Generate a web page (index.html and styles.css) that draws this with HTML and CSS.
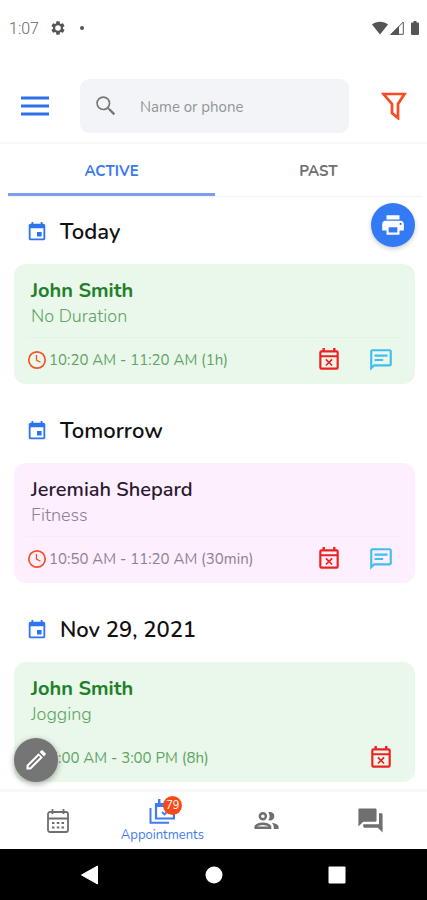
FILE: index.html
```
<!DOCTYPE html>
<html lang="en">
<head>
<meta charset="utf-8">
<meta name="viewport" content="width=device-width, initial-scale=1">
<title>Appointments</title>
<link rel="stylesheet" href="styles.css">
</head>
<body>
<svg class="sprite" aria-hidden="true">
  <symbol id="day" viewBox="0 0 24 24"><path d="M17 12h-5v5h5v-5zM16 1v2H8V1H6v2H5c-1.100 0-2 .9-2 2v14c0 1.100.9 2 2 2h14c1.100 0 2-.9 2-2V5c0-1.100-.9-2-2-2h-1V1h-2zm3 18H5V8h14v11z"/></symbol>
  <symbol id="clock" viewBox="0 0 20 20"><circle cx="10" cy="10" r="8.200" fill="none" stroke="currentColor" stroke-width="1.700"/><path d="M9.500 5v5l4 2.200" fill="none" stroke="currentColor" stroke-width="1.300"/></symbol>
  <symbol id="cancel" viewBox="0 0 24 24"><path d="M19 3h-1V1h-2.200v2H8.200V1H6v2H5a2 2 0 0 0-2 2v14a2 2 0 0 0 2 2h14a2 2 0 0 0 2-2V5a2 2 0 0 0-2-2zm0 16H5V9.500h14V19zm0-11.500H5V5h14v2.500zM9.700 17.600l2.300-2.300 2.300 2.300 1.100-1.100-2.300-2.300 2.300-2.300-1.100-1.100-2.300 2.300-2.300-2.300-1.100 1.100 2.300 2.300-2.300 2.300z"/></symbol>
  <symbol id="message" viewBox="0 0 24 24"><path d="M4 4h16v12H5.200L4 17.200V4m0-2c-1.100 0-2 .9-2 2v18l4-4h14c1.100 0 2-.9 2-2V4c0-1.100-.9-2-2-2H4zm2 9h8v2H6v-2zm0-4h12v2H6V7z"/></symbol>
</svg>
<div class="app">
  <header class="top">
    <div class="status">
      <span class="time">1:07</span>
      <svg class="gear" viewBox="0 0 24 24"><path d="M19.430 12.980a7.800 7.800 0 0 0 0-1.960l2.110-1.650a.5.5 0 0 0 .12-.64l-2-3.460a.5.5 0 0 0-.61-.22l-2.490 1a7.300 7.300 0 0 0-1.690-.98l-.38-2.650A.49.49 0 0 0 14 2h-4a.49.49 0 0 0-.49.42l-.38 2.650c-.61.25-1.170.59-1.690.98l-2.490-1a.5.5 0 0 0-.61.22l-2 3.460a.49.49 0 0 0 .12.64l2.110 1.650a7.900 7.900 0 0 0 0 1.960l-2.110 1.650a.5.5 0 0 0-.12.64l2 3.460c.12.22.39.3.61.22l2.490-1c.52.4 1.080.73 1.690.98l.38 2.650c.03.24.24.42.49.42h4c.25 0 .46-.18.49-.42l.38-2.650c.61-.25 1.170-.59 1.690-.98l2.490 1c.23.09.49 0 .61-.22l2-3.460a.5.5 0 0 0-.12-.64zM12 16.200a4.200 4.200 0 1 1 0-8.400 4.200 4.200 0 0 1 0 8.400z"/></svg>
      <span class="dot"></span>
      <span class="signals">
        <svg class="wifi" viewBox="0 0 16 14"><path d="M8 13.500L0 3.500C4.500-.2 11.500-.2 16 3.500z"/></svg>
        <svg class="cell" viewBox="0 0 14 14"><path d="M13.300 1v12.300H1z" fill="none" stroke="currentColor"/><path d="M0 14L9 5v9z"/></svg>
        <svg class="battery" viewBox="0 0 8 14"><path d="M2.500 0h3v1.500H7a1 1 0 0 1 1 1V13a1 1 0 0 1-1 1H1a1 1 0 0 1-1-1V2.500a1 1 0 0 1 1-1h1.500z"/></svg>
      </span>
    </div>
    <div class="toolbar">
      <button class="menu" aria-label="Menu"><svg viewBox="0 0 28 20"><path d="M0 2h28M0 10h28M0 18h28" stroke="currentColor" stroke-width="3"/></svg></button>
      <label class="search">
        <svg viewBox="0 0 24 24"><path d="M15.500 14h-.79l-.28-.27A6.470 6.470 0 0 0 16 9.500 6.500 6.500 0 1 0 9.500 16c1.610 0 3.090-.59 4.230-1.570l.27.28v.79l5 4.990L20.490 19l-4.990-5zm-6 .5a5 5 0 1 1 0-10 5 5 0 0 1 0 10z"/></svg>
        <input type="search" placeholder="Name or phone" aria-label="Name or phone">
      </label>
      <button class="filter" aria-label="Filter"><svg viewBox="0 0 26 28"><path d="M2.500 2h21l-6.500 10V26l-6-5v-9z" fill="none" stroke="currentColor" stroke-width="2.700"/></svg></button>
    </div>
  </header>
  <nav class="tabs">
    <button class="tab selected">ACTIVE</button>
    <button class="tab">PAST</button>
  </nav>
  <main class="list">
    <button class="fab print" aria-label="Print"><svg viewBox="0 0 24 24"><path d="M19 8H5c-1.660 0-3 1.340-3 3v6h4v4h12v-4h4v-6c0-1.660-1.340-3-3-3zm-3 11H8v-5h8v5zm3-7a1 1 0 1 1 0-2 1 1 0 0 1 0 2zm-1-9H6v4h12V3z"/></svg></button>
    <section>
      <h2 class="day"><svg><use href="#day"/></svg>Today</h2>
      <article class="card green">
        <h3>John Smith</h3>
        <p class="service">No Duration</p>
        <div class="row">
          <svg class="clock"><use href="#clock"/></svg><span class="when">10:20 AM - 11:20 AM (1h)</span>
          <button class="cancel" aria-label="Cancel appointment"><svg><use href="#cancel"/></svg></button>
          <button class="message" aria-label="Send message"><svg><use href="#message"/></svg></button>
        </div>
      </article>
    </section>
    <section>
      <h2 class="day"><svg><use href="#day"/></svg>Tomorrow</h2>
      <article class="card pink">
        <h3>Jeremiah Shepard</h3>
        <p class="service">Fitness</p>
        <div class="row">
          <svg class="clock"><use href="#clock"/></svg><span class="when">10:50 AM - 11:20 AM (30min)</span>
          <button class="cancel" aria-label="Cancel appointment"><svg><use href="#cancel"/></svg></button>
          <button class="message" aria-label="Send message"><svg><use href="#message"/></svg></button>
        </div>
      </article>
    </section>
    <section>
      <h2 class="day"><svg><use href="#day"/></svg>Nov 29, 2021</h2>
      <article class="card green">
        <h3>John Smith</h3>
        <p class="service">Jogging</p>
        <div class="row plain">
          <svg class="clock"><use href="#clock"/></svg><span class="when">7:00 AM - 3:00 PM (8h)</span>
          <button class="cancel" aria-label="Cancel appointment"><svg><use href="#cancel"/></svg></button>
        </div>
      </article>
    </section>
    <button class="fab edit" aria-label="Edit"><svg viewBox="0 0 24 24"><path d="M2.500 21.500v-4.300L14.500 5.200l4.300 4.300L6.800 21.500zM15.600 4.100l1.700-1.700a1 1 0 0 1 1.400 0l2.900 2.900a1 1 0 0 1 0 1.400l-1.700 1.700z"/><path class="cut" d="M5 19L15.500 8.500" stroke-width="1.800"/></svg></button>
  </main>
  <nav class="bottom">
    <a href="#calendar" aria-label="Calendar"><svg class="calendar" viewBox="0 0 24 26"><rect x="2" y="4" width="20" height="20" rx="2" fill="none" stroke="currentColor" stroke-width="1.800"/><path d="M2 10.500h20M6.500 1v5M17.500 1v5" stroke="currentColor" stroke-width="1.800"/><path d="M6 14h2.500v2H6zm4.800 0h2.500v2h-2.500zm4.700 0H18v2h-2.500zM6 18.500h2.500v2H6zm4.800 0h2.500v2h-2.500zm4.700 0H18v2h-2.500z"/></svg></a>
    <a class="current" href="#appointments">
      <span class="icon"><svg viewBox="0 0 26 26"><path d="M1.500 9v14.800H20" fill="none" stroke="currentColor" stroke-width="2"/><path d="M7 5h18v14.500H7z" fill="none" stroke="currentColor" stroke-width="2.200"/><path d="M6 4h19v4H6zM9 0h2.500v5H9zM20 0h2.500v5H20z"/><path d="M13 13l2.500 2.500L20 11" fill="none" stroke="currentColor" stroke-width="1.800"/></svg><span class="badge">79</span></span>
      <span>Appointments</span>
    </a>
    <a href="#clients" aria-label="Clients"><svg class="people" viewBox="0 0 24 24"><path d="M9 13.750c-2.340 0-7 1.170-7 3.500V19h14v-1.750c0-2.330-4.660-3.500-7-3.500zM4.340 17c.84-.58 2.870-1.250 4.660-1.250s3.820.67 4.660 1.250zM9 12a3.500 3.500 0 1 0 0-7 3.500 3.500 0 0 0 0 7zm0-5a1.500 1.500 0 1 1 0 3 1.500 1.500 0 0 1 0-3zm7.040 6.810c1.160.84 1.960 1.960 1.960 3.440V19h4v-1.750c0-2.020-3.500-3.170-5.960-3.440zM15 12a3.500 3.500 0 1 0 0-7c-.54 0-1.040.13-1.500.35a5.500 5.500 0 0 1 0 6.300c.46.22.96.35 1.500.35z"/></svg></a>
    <a href="#chat" aria-label="Chat"><svg class="chat" viewBox="0 0 24 24"><path d="M21 6h-2v9H6v2c0 .55.45 1 1 1h11l4 4V7c0-.55-.45-1-1-1zm-4 6V3c0-.55-.45-1-1-1H3c-.55 0-1 .45-1 1v14l4-4h10c.55 0 1-.45 1-1z"/></svg></a>
  </nav>
  <footer class="system">
    <button aria-label="Back"><svg viewBox="0 0 20 20"><path d="M17.500 1v18L1.500 10z" stroke="currentColor" stroke-linejoin="round"/></svg></button>
    <button aria-label="Home"><svg viewBox="0 0 20 20"><circle cx="10" cy="10" r="8.500"/></svg></button>
    <button aria-label="Recent apps"><svg viewBox="0 0 20 20"><rect x="1.500" y="1.500" width="17" height="17" rx="1"/></svg></button>
  </footer>
</div>
</body>
</html>
```
FILE: styles.css
```
* { box-sizing: border-box; }
body {
  margin: 0;
  background: #fff;
  color: #111;
  font-family: Nunito, Lato, "Open Sans", sans-serif;
}
h2, h3, p { margin: 0; }
svg { display: block; fill: currentColor; flex: none; }
.sprite { display: none; }
button {
  margin: 0;
  padding: 0;
  border: 0;
  background: none;
  color: inherit;
  font: inherit;
  cursor: pointer;
}
a { color: inherit; text-decoration: none; }

.app { display: flex; flex-direction: column; height: 100vh; }

.top { border-bottom: 2px solid #f7f7f7; }
.status {
  display: flex;
  align-items: center;
  height: 56px;
  padding: 0 8px 0 9px;
  color: #555;
}
.time { font: 300 16px Roboto, sans-serif; color: #666; }
.gear { width: 16px; height: 16px; margin-left: 11px; }
.dot { width: 4px; height: 4px; margin-left: 14px; border-radius: 50%; background: #555; }
.signals { display: flex; align-items: center; margin-left: auto; }
.wifi { width: 16px; height: 14px; }
.cell { width: 14px; height: 14px; margin: 0 7px 0 2px; }
.battery { width: 8px; height: 14px; }

.toolbar { display: flex; align-items: center; padding: 23px 20px 9px 21px; }
.menu { color: #2f6fea; }
.menu svg { width: 28px; height: 20px; }
.search {
  display: flex;
  flex: 1;
  align-items: center;
  min-width: 0;
  height: 54px;
  margin: 0 32px 0 31px;
  padding: 0 13px;
  border-radius: 9px;
  background: #f2f4f8;
  color: #757575;
}
.search svg { width: 26px; height: 26px; }
.search input {
  flex: 1;
  min-width: 0;
  margin-left: 21px;
  padding: 2px 0 0;
  border: 0;
  outline: 0;
  background: none;
  font: inherit;
  font-size: 15px;
}
.search input::placeholder { color: #929497; opacity: 1; }
.filter { color: #fb4a20; }
.filter svg { width: 26px; height: 28px; }

.tabs {
  display: flex;
  margin: 0 5px 0 8px;
  border-bottom: 1px solid #f3f3f3;
}
.tab {
  flex: 1;
  height: 52px;
  padding: 5px 0 0;
  border-bottom: 3px solid transparent;
  color: #707070;
  font-size: 15px;
  font-weight: 700;
}
.tab.selected { border-color: #7d9df0; color: #3a78f2; }

.list {
  position: relative;
  flex: 1;
  min-height: 0;
  padding: 0 12px 0 14px;
  overflow-y: auto;
  scrollbar-width: none;
}
.list section { padding-bottom: 12px; }
.day {
  display: flex;
  align-items: center;
  gap: 12px;
  height: 67px;
  padding: 2px 0 0 12px;
  font-size: 22px;
  font-weight: 600;
}
.day svg { width: 22px; height: 22px; color: #2d74f3; }
.card {
  height: 120px;
  padding: 14px 12px 0;
  border-radius: 12px;
}
.green { background: #e9f8ea; color: #5fa365; }
.pink { background: #fdeffe; color: #8d8191; }
.card h3 {
  padding-left: 5px;
  font-size: 20px;
  font-weight: 700;
  line-height: 26px;
}
.green h3 { color: #227f2a; }
.pink h3 { color: #2b1a31; font-weight: 600; }
.service { padding-left: 5px; font-size: 18px; font-weight: 300; line-height: 24px; }
.row {
  display: flex;
  align-items: center;
  height: 44px;
  margin-top: 9px;
  padding-right: 9px;
  border-top: 1px solid rgb(0 0 0 / 2%);
}
.plain { border-color: transparent; }
.clock { width: 22px; height: 20px; color: #f45129; }
.when { margin-right: auto; padding-left: 1px; font-size: 15px; }
.cancel { color: #ee2020; }
.message { margin-left: 26px; color: #42bdf0; }
.row button svg { width: 26px; height: 26px; }

.fab {
  position: absolute;
  display: grid;
  place-items: center;
  width: 44px;
  height: 44px;
  border-radius: 50%;
  color: #fff;
}
.print { top: 6px; right: 12px; background: #347af4; box-shadow: 0 2px 5px rgb(0 0 0 / 20%); }
.print svg { width: 26px; height: 26px; }
.edit { bottom: 7px; left: 14px; background: #757575; box-shadow: 0 2px 6px rgb(0 0 0 / 35%); }
.edit svg { width: 24px; height: 24px; }
.cut { stroke: #757575; }

.bottom {
  display: grid;
  grid-template-columns: repeat(4, 1fr);
  height: 60px;
  padding: 0 4px 0 6px;
  border-top: 3px solid #f8f8f8;
  color: #6f6f6f;
}
.bottom a {
  display: flex;
  flex-direction: column;
  align-items: center;
  justify-content: center;
}
.calendar { width: 24px; height: 26px; }
.people { width: 29px; height: 29px; }
.chat { width: 29px; height: 29px; }
.bottom .current { gap: 2px; color: #3f7cf2; font-size: 13px; line-height: 16px; }
.icon { position: relative; }
.icon svg { width: 26px; height: 26px; }
.badge {
  position: absolute;
  top: -3px;
  left: 14px;
  width: 19px;
  height: 19px;
  border-radius: 50%;
  background: #f64b18;
  color: #fff;
  font-size: 11px;
  line-height: 19px;
  text-align: center;
}

.system {
  display: flex;
  align-items: center;
  justify-content: space-between;
  height: 51px;
  padding: 0 80px;
  background: #000;
  color: #fff;
}
.system svg { width: 20px; height: 20px; }
```
